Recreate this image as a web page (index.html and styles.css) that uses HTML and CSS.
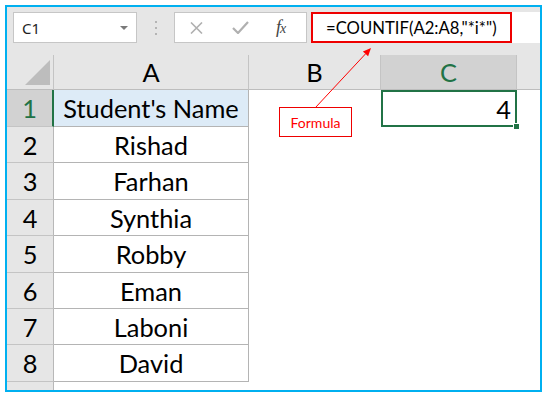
FILE: index.html
```html
<!DOCTYPE html>
<html>
<head>
<meta charset="utf-8">
<link rel="stylesheet" href="styles.css">
</head>
<body>
<div class="frame">
  <div class="bar">
    <div class="namebox">
      <span class="ref">C1</span>
      <svg class="drop" width="8" height="4" viewBox="0 0 8 4"><polygon points="0,0 8,0 4,4" fill="#7a7a7a"/></svg>
    </div>
    <div class="dots">
      <svg width="2" height="14" viewBox="0 0 2 14"><rect x="0" y="0" width="2" height="2" fill="#b4b4b4"/><rect x="0" y="6" width="2" height="2" fill="#b4b4b4"/><rect x="0" y="12" width="2" height="2" fill="#b4b4b4"/></svg>
    </div>
    <div class="btns">
      <svg class="ico-x" width="13" height="12" viewBox="0 0 13 12"><path d="M1 0.5 L12 11.5 M12 0.5 L1 11.5" stroke="#b0b0b0" stroke-width="1.6" fill="none"/></svg>
      <svg class="ico-ok" width="17" height="13" viewBox="0 0 17 13"><path d="M1 7 L6 12 L16 1" stroke="#b0b0b0" stroke-width="2.2" fill="none"/></svg>
      <span class="fx"><i>f</i><i class="fxx">x</i></span>
    </div>
    <div class="input">
      <div class="hl"><span class="ftext">=COUNTIF(A2:A8,"*i*")</span></div>
    </div>
  </div>
  <div class="grid">
    <div class="corner"><svg width="25" height="25" viewBox="0 0 25 25"><polygon points="25,0 25,25 0,25" fill="#bdbdbd"/></svg></div>
    <div class="ch">A</div>
    <div class="ch">B</div>
    <div class="ch sel">C</div>
    <div class="ch last"></div>

    <div class="rh sel">1</div><div class="ca head">Student's Name</div><div class="cb"></div><div class="cc active">4</div><div class="cd"></div>
    <div class="rh">2</div><div class="ca">Rishad</div><div class="cb"></div><div class="cc"></div><div class="cd"></div>
    <div class="rh">3</div><div class="ca">Farhan</div><div class="cb"></div><div class="cc"></div><div class="cd"></div>
    <div class="rh">4</div><div class="ca">Synthia</div><div class="cb"></div><div class="cc"></div><div class="cd"></div>
    <div class="rh">5</div><div class="ca">Robby</div><div class="cb"></div><div class="cc"></div><div class="cd"></div>
    <div class="rh">6</div><div class="ca">Eman</div><div class="cb"></div><div class="cc"></div><div class="cd"></div>
    <div class="rh">7</div><div class="ca">Laboni</div><div class="cb"></div><div class="cc"></div><div class="cd"></div>
    <div class="rh">8</div><div class="ca">David</div><div class="cb"></div><div class="cc"></div><div class="cd"></div>
    <div class="rh"></div><div class="cb"></div><div class="cb"></div><div class="cc"></div><div class="cd"></div>
  </div>
  <div class="note">Formula</div>
  <svg class="arrow" width="533" height="383" viewBox="0 0 533 383">
    <line x1="308.7" y1="100.3" x2="358.5" y2="46.9" stroke="#ff0000" stroke-width="1"/>
    <polygon points="364,41 361.1,49.3 355.9,44.5" fill="#ff0000"/>
  </svg>
</div>
</body>
</html>
```

FILE: styles.css
```css
html, body {
  margin: 0;
  padding: 0;
  background: #ffffff;
}

.frame {
  position: relative;
  box-sizing: border-box;
  margin: 5px 0 0 5px;
  width: 537px;
  height: 387px;
  border: 2px solid #00b0f0;
  background: #e6e6e6;
  overflow: hidden;
}

.bar {
  display: flex;
  align-items: stretch;
  height: 31px;
  padding: 5px 0 0 6px;
}

.namebox {
  box-sizing: border-box;
  width: 124px;
  height: 31px;
  background: #ffffff;
  border: 1px solid #c6c6c6;
  display: flex;
  align-items: center;
  padding-left: 8px;
}

.ref {
  font-family: "Noto Sans", sans-serif;
  font-size: 15px;
  color: #1e1e1e;
  flex: 1;
}

.drop {
  margin-right: 8px;
}

.dots {
  width: 37px;
  display: flex;
  align-items: center;
  justify-content: center;
}

.btns {
  box-sizing: border-box;
  width: 133px;
  height: 31px;
  background: #ffffff;
  border: 1px solid #c6c6c6;
  display: flex;
  align-items: center;
  padding-left: 15px;
}

.ico-ok {
  margin-left: 29px;
}

.fx {
  margin-left: 27px;
  font-family: "Liberation Serif", serif;
  font-size: 18px;
  color: #444444;
  letter-spacing: -1px;
}

.fxx {
  font-size: 14px;
}

.input {
  flex: 1;
  margin-left: 4px;
  height: 31px;
  background: #ffffff;
}

.hl {
  box-sizing: border-box;
  width: 201px;
  height: 31px;
  border: 2px solid #ee0000;
  display: flex;
  align-items: center;
  padding-left: 13px;
}

.ftext {
  font-family: "Lato", sans-serif;
  font-size: 16.7px;
  color: #000000;
}

.grid {
  margin-top: 12px;
  display: grid;
  grid-template-columns: 47px 195px 132px 136px 23px;
  grid-template-rows: 35px 37px 36px 37px 36px 37px 36px 36px 37px 20px;
  font-family: "Lato", sans-serif;
  font-size: 25.4px;
  color: #000000;
}

.grid > div {
  box-sizing: border-box;
  display: flex;
  align-items: center;
  justify-content: center;
}

.corner {
  border-right: 1px solid #c4c4c4;
  border-bottom: 1px solid #bdbdbd;
  padding: 5px 3px 4px 0;
  justify-content: flex-end !important;
  align-items: flex-end !important;
}

.ch {
  background: #e6e6e6;
  border-right: 1px solid #c4c4c4;
  border-bottom: 1px solid #bdbdbd;
}

.ch.sel {
  background: #d2d2d2;
  color: #217346;
}

.ch.last {
  border-right: none;
}

.rh {
  background: #e6e6e6;
  border-right: 1px solid #b8b8b8;
  border-bottom: 1px solid #c4c4c4;
}

.rh.sel {
  background: #d2d2d2;
  color: #217346;
  border-right: 2px solid #217346;
}

.ca {
  background: #ffffff;
  border-right: 1px solid #b4b4b4;
  border-bottom: 1px solid #b4b4b4;
}

.ca.head {
  background: #ddebf7;
}

.cb, .cc, .cd {
  background: #ffffff;
}

.cc.active {
  position: relative;
  justify-content: flex-end !important;
  padding-right: 6px;
  box-shadow: inset 0 0 0 2px #217346;
}

.cc.active::after {
  content: "";
  position: absolute;
  right: -3px;
  bottom: -3px;
  width: 5px;
  height: 5px;
  background: #217346;
  border: 1px solid #ffffff;
}

.note {
  position: absolute;
  left: 272px;
  top: 100px;
  box-sizing: border-box;
  width: 73px;
  height: 30px;
  border: 1px solid #ee0000;
  background: #ffffff;
  color: #ff0000;
  font-family: "Lato", sans-serif;
  font-size: 14px;
  display: flex;
  align-items: center;
  justify-content: center;
}

.arrow {
  position: absolute;
  left: 0;
  top: 0;
  pointer-events: none;
}
```
